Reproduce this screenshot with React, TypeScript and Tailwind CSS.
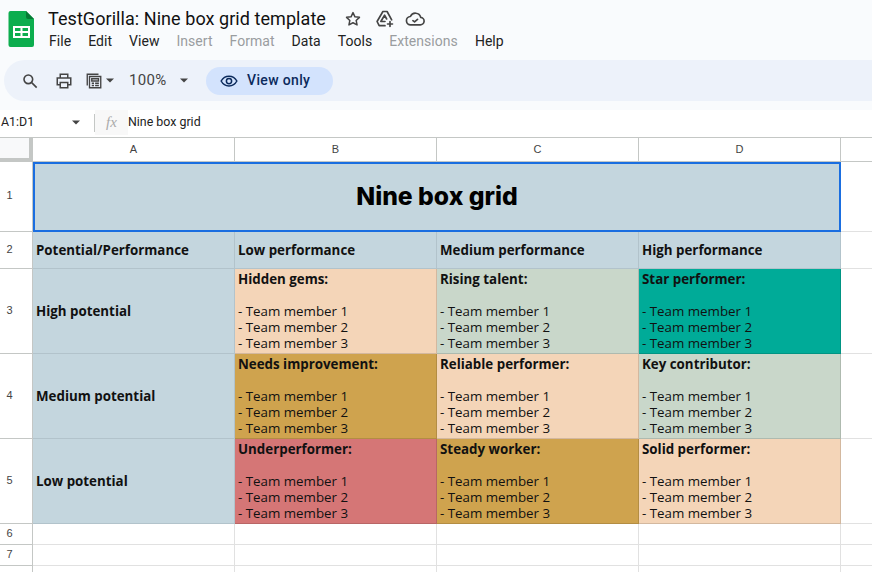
import React from "react";

const P = "#f4d5b8", G = "#c9d7ca", T = "#00ab98", O = "#cfa34e", R = "#d57676";
const cols = ["A", "B", "C", "D"];

function Caret({ className = "" }: { className?: string }) {
  return (
    <svg width="10" height="5" viewBox="0 0 10 5" className={className}>
      <path d="M0 0h10L5 5z" fill="currentColor" />
    </svg>
  );
}

function Box({ title, bg }: { title: string; bg: string }) {
  return (
    <div
      className="px-[3px] pt-[2px] text-[13.33px] leading-[16px] text-[#111] border-r border-b border-[#00000022] overflow-hidden"
      style={{ backgroundColor: bg }}
    >
      <div className="font-bold">{title}</div>
      <div>&nbsp;</div>
      <div>- Team member 1</div>
      <div>- Team member 2</div>
      <div>- Team member 3</div>
    </div>
  );
}

function RowHead({ n }: { n?: number }) {
  return (
    <div className="flex items-center justify-center pr-[13px] pb-[2px] bg-white border-r border-b border-[#c4c7c5] text-[11px] text-[#444] font-['Liberation_Sans',sans-serif]">
      {n}
    </div>
  );
}

function Side({ text }: { text: string }) {
  return (
    <div className="flex items-center px-[3px] pt-[2px] bg-[#c4d6de] border-r border-b border-[#b2c3cb] text-[13.33px] font-bold text-[#111]">
      {text}
    </div>
  );
}

function Empty() {
  return <div className="border-r border-b border-[#e1e1e1] bg-white" />;
}

export default function App() {
  return (
    <div className="w-[872px] h-[572px] overflow-hidden bg-white font-['Open_Sans',sans-serif]">
      <div className="h-[110px] bg-[#f9fbfd] flex flex-col font-['Roboto',sans-serif]">
        <div className="flex h-[60px]">
          <svg width="26" height="36" viewBox="0 0 26 36" className="ml-[8px] mt-[11px]">
            <path d="M2.500 0H18l8 8v26a2 2 0 0 1-2 2H2.500a2 2 0 0 1-2-2V2a2 2 0 0 1 2-2z" fill="#0cad4e" />
            <path d="M18 0l8 8h-6a2 2 0 0 1-2-2z" fill="#067a35" />
            <path d="M5 15h17v12H5zM7 17v3h5.500v-3zM14.500 17v3H20v-3zM7 22v3h5.500v-3zM14.500 22v3H20v-3z" fill="#fff" fillRule="evenodd" />
          </svg>
          <div className="ml-[14px] flex flex-col">
            <div className="flex items-center h-[20px] mt-[9px]">
              <span className="text-[18px] text-[#111] leading-[20px] tracking-[0.06px]">TestGorilla: Nine box grid template</span>
              <svg width="18" height="18" viewBox="0 0 24 24" className="ml-[18px]" fill="none" stroke="#444" strokeWidth="2" strokeLinejoin="round">
                <path d="M12 3.500l2.600 5.600 6 .7-4.400 4.100 1.200 6L12 17l-5.400 2.900 1.200-6L3.400 9.800l6-.7z" />
              </svg>
              <svg width="20" height="20" viewBox="0 0 24 24" className="ml-[13px]" fill="none" stroke="#444" strokeWidth="2" strokeLinejoin="round" strokeLinecap="round">
                <path d="M9.500 3h5L20 13M9.500 3L2.500 15l2.500 5h7M12 15H7l4.500-7.500L14 12M18 15v6M15 18h6" />
              </svg>
              <svg width="20" height="20" viewBox="0 0 24 24" className="ml-[10px]" fill="none" stroke="#444" strokeWidth="2" strokeLinejoin="round" strokeLinecap="round">
                <path d="M7 19a5 5 0 0 1-.5-10A6.500 6.500 0 0 1 18.800 10 4.500 4.500 0 0 1 18 19zM9.500 14l2 1.500 3.500-3" />
              </svg>
            </div>
            <div className="flex items-center gap-[17px] mt-[4px] ml-[1px] text-[14px] leading-[16px] text-[#222] tracking-[0.04px]">
              <span>File</span>
              <span>Edit</span>
              <span>View</span>
              <span className="text-[#9a9da0]">Insert</span>
              <span className="text-[#9a9da0]">Format</span>
              <span>Data</span>
              <span>Tools</span>
              <span className="text-[#9a9da0]">Extensions</span>
              <span>Help</span>
            </div>
          </div>
        </div>
        <div className="ml-[4px] w-[868px] h-[41px] bg-[#edf2fa] rounded-l-full flex items-center text-[#444]">
          <svg width="16" height="16" viewBox="0 0 24 24" className="ml-[18px]" fill="none" stroke="#444" strokeWidth="2.400">
            <circle cx="9.500" cy="9.500" r="6.500" />
            <path d="M14.500 14.500L22 22" />
          </svg>
          <svg width="18" height="18" viewBox="0 0 24 24" className="ml-[17px]" fill="none" stroke="#444" strokeWidth="2">
            <path d="M7 8V3h10v5M7 17H3V8h18v9h-4M7 14h10v7H7z" />
          </svg>
          <svg width="18" height="18" viewBox="0 0 24 24" className="ml-[12px]" fill="none" stroke="#444" strokeWidth="1.800">
            <path d="M3 18V3h15M6 21V6h15v15zM9 9h9v3H9zM9 15h3M9 18h3M13.500 15h5M13.500 18h5" />
          </svg>
          <Caret className="ml-[3px] text-[#444] w-[8px]" />
          <span className="ml-[15px] text-[15px] w-[50px] tracking-[0.3px]">100%</span>
          <Caret className="ml-[1px] text-[#444] w-[8px]" />
          <div className="ml-[18px] w-[127px] h-[28px] rounded-full bg-[#d3e3fd] flex items-center text-[#0b2a5c] text-[14px] font-medium">
            <svg width="18" height="18" viewBox="0 0 24 24" className="ml-[14px]" fill="none" stroke="#0b2a5c" strokeWidth="2">
              <path d="M1.500 12C4 7.500 8 5.500 12 5.500s8 2 10.500 6.500C20 16.500 16 18.500 12 18.500S4 16.500 1.500 12z" />
              <circle cx="12" cy="12" r="3.500" />
            </svg>
            <span className="ml-[9px] tracking-[0.35px]">View only</span>
          </div>
        </div>
      </div>

      <div className="h-[28px] flex items-center pb-[2px] bg-white border-b border-[#c4c7c5] text-[12.400px] text-[#222]">
        <span className="ml-[1px] w-[71px] font-['Roboto',sans-serif]">A1:D1</span>
        <Caret className="text-[#444] w-[8px]" />
        <div className="ml-[14px] h-[18px] w-px bg-[#c4c7c5]" />
        <div className="w-[33px] h-[25px] flex items-center justify-center bg-[#f8f8f8] text-[#aaa] italic font-['Liberation_Serif',serif] text-[15px]">fx</div>
        <span className="font-['Roboto',sans-serif]">Nine box grid</span>
      </div>

      <div className="grid grid-cols-[33px_202px_202px_202px_202px_32px] grid-rows-[24px_70px_37px_85px_85px_85px_21px_21px_21px]">
        <div className="bg-[#f8f9fa] border-r-4 border-b-4 border-[#c4c7c5]" />
        {cols.map((c) => (
          <div key={c} className="flex items-center justify-center bg-white border-r border-b border-[#c4c7c5] text-[11px] text-[#444] font-['Liberation_Sans',sans-serif]">
            {c}
          </div>
        ))}
        <div className="bg-white border-b border-[#c4c7c5]" />

        <RowHead n={1} />
        <div className="col-span-4 flex items-center justify-center bg-[#c4d6de] border-2 border-[#1a6ee0] text-[24.700px] font-['Inter',sans-serif] font-extrabold text-black">
          Nine box grid
        </div>
        <Empty />

        <RowHead n={2} />
        <Side text="Potential/Performance" />
        <Side text="Low performance" />
        <Side text="Medium performance" />
        <Side text="High performance" />
        <Empty />

        <RowHead n={3} />
        <Side text="High potential" />
        <Box title="Hidden gems:" bg={P} />
        <Box title="Rising talent:" bg={G} />
        <Box title="Star performer:" bg={T} />
        <Empty />

        <RowHead n={4} />
        <Side text="Medium potential" />
        <Box title="Needs improvement:" bg={O} />
        <Box title="Reliable performer:" bg={P} />
        <Box title="Key contributor:" bg={G} />
        <Empty />

        <RowHead n={5} />
        <Side text="Low potential" />
        <Box title="Underperformer:" bg={R} />
        <Box title="Steady worker:" bg={O} />
        <Box title="Solid performer:" bg={P} />
        <Empty />

        {[6, 7, undefined].map((n, i) => (
          <React.Fragment key={i}>
            <RowHead n={n} />
            <Empty />
            <Empty />
            <Empty />
            <Empty />
            <Empty />
          </React.Fragment>
        ))}
      </div>
    </div>
  );
}
